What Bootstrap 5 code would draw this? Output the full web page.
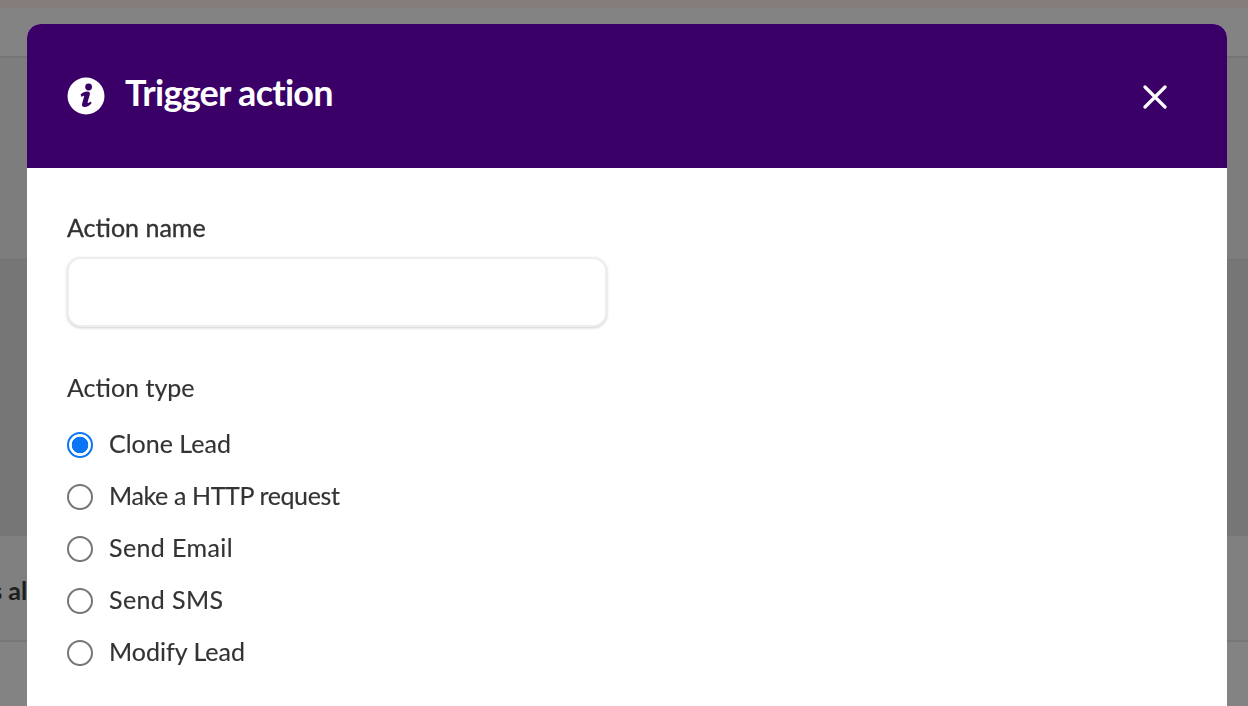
<!DOCTYPE html>
<html lang="en">
<head>
    <meta charset="UTF-8">
    <meta name="viewport" content="width=device-width, initial-scale=1.0">
    <title>Trigger action</title>
    <link href="https://cdn.jsdelivr.net/npm/bootstrap@5.3.0/dist/css/bootstrap.min.css" rel="stylesheet">
    <style>
        body {
            font-family: "Lato", "Open Sans", sans-serif;
            color: #333;
            background-color: #fbfbfb;
            overflow: hidden;
        }
        .page-topbar {
            height: 8px;
            background-color: #fff0e8;
        }
        .page-head {
            height: 50px;
            border-bottom: 2px solid #e1e1e1;
        }
        .page-tabs {
            height: 203px;
            background-color: #f0f0f0;
            border-bottom: 2px solid #dcdcdc;
        }
        .page-panel {
            height: 275px;
            background-color: #e3e3e3;
        }
        .page-row {
            height: 106px;
            padding-top: 39px;
            border-bottom: 2px solid #e4e4e4;
            background-color: #f6f6f6;
            font-size: 25px;
            line-height: 30px;
            font-weight: 700;
            color: #3a3a3a;
            white-space: nowrap;
            text-indent: -142px;
        }
        .modal-backdrop.show {
            opacity: .48;
        }
        .trigger-dialog {
            max-width: 1200px;
            width: 1200px;
            margin: 24px 0 0 27px;
        }
        .trigger-dialog .modal-content {
            border: 0;
            border-radius: 14px 14px 0 0;
        }
        .trigger-head {
            height: 144px;
            padding: 0 60px 0 40px;
            background-color: #3a0068;
            border: 0;
            border-radius: 14px 14px 0 0;
        }
        .trigger-title {
            font-size: 36px;
            line-height: 44px;
            font-weight: 700;
            letter-spacing: -.72px;
            color: #fff;
            margin-top: -8px;
        }
        .trigger-icon {
            width: 38px;
            height: 38px;
            margin-right: 20px;
            flex-shrink: 0;
            margin-top: -1px;
        }
        .trigger-close {
            width: 24px;
            height: 24px;
            line-height: 0;
            margin-top: 2px;
        }
        .trigger-body {
            padding: 43px 40px 60px;
        }
        .field-label {
            font-size: 25px;
            line-height: 32px;
            margin-bottom: 14px;
            -webkit-text-stroke: .35px #333;
        }
        .field-name {
            width: 540px;
            height: 70px;
            border: 2px solid #eee;
            border-radius: 14px;
            box-shadow: 0 1px 3px rgba(0, 0, 0, .2);
            margin-bottom: 44px;
        }
        .type-label {
            font-size: 25px;
            line-height: 32px;
            margin-bottom: 16px;
            -webkit-text-stroke: .15px #333;
        }
        .type-option {
            display: flex;
            align-items: center;
            height: 52px;
            padding: 0;
            margin: 0;
            font-size: 25px;
            -webkit-text-stroke: .15px #333;
        }
        .type-option span {
            margin-top: -2px;
        }
        .type-option .tight-text {
            letter-spacing: -.38px;
        }
        .type-option .wide-text {
            letter-spacing: .4px;
        }
        .type-option .form-check-input {
            width: 26px;
            height: 26px;
            margin: 0 16px 0 0;
            border: 2px solid #767676;
            float: none;
        }
        .type-option .form-check-input:checked {
            background-color: #fff;
            border-color: #0a75f5;
            background-image: radial-gradient(circle, #0a75f5 0, #0a75f5 8px, transparent 8.6px);
        }
    </style>
</head>
<body>
    <div class="page-topbar"></div>
    <div class="page-head"></div>
    <div class="page-tabs"></div>
    <div class="page-panel"></div>
    <div class="page-row">Notifications always</div>

    <div class="modal-backdrop fade show"></div>
    <div class="modal d-block overflow-hidden" tabindex="-1">
        <div class="modal-dialog trigger-dialog">
            <div class="modal-content">
                <div class="modal-header trigger-head">
                    <div class="d-flex align-items-center">
                        <svg class="trigger-icon" viewBox="0 0 38 38">
                            <circle cx="19" cy="19" r="18.5" fill="#fff"/>
                            <circle cx="21.6" cy="10" r="3.4" fill="#3a0068"/>
                            <path d="M13.5 17.6c2-2 4.4-3.2 6.8-3.2 2 0 3 1.1 2.5 3l-2.2 7.8c-.2.8.4 1 1 .6.6-.4 1.2-.9 1.7-1.4l1.4 1.6c-2.2 2.6-4.6 4-7 4-2.2 0-3.2-1.2-2.6-3.3l2-7.2c.2-.8-.4-1-1-.6-.5.3-1 .7-1.4 1.1z" fill="#3a0068"/>
                        </svg>
                        <h5 class="modal-title trigger-title">Trigger action</h5>
                    </div>
                    <button type="button" class="btn p-0 border-0 trigger-close" aria-label="Close">
                        <svg width="24" height="24" viewBox="0 0 24 24"><path d="M2 2l20 20M22 2L2 22" stroke="#fff" stroke-width="3.2" stroke-linecap="round" fill="none"/></svg>
                    </button>
                </div>
                <div class="modal-body trigger-body">
                    <label class="form-label d-block field-label" for="actionName">Action name</label>
                    <input type="text" class="form-control field-name" id="actionName">
                    <div class="type-label">Action type</div>
                    <label class="form-check type-option"><input class="form-check-input" type="radio" name="actionType" checked><span>Clone Lead</span></label>
                    <label class="form-check type-option"><input class="form-check-input" type="radio" name="actionType"><span class="tight-text">Make a HTTP request</span></label>
                    <label class="form-check type-option"><input class="form-check-input" type="radio" name="actionType"><span class="wide-text">Send Email</span></label>
                    <label class="form-check type-option"><input class="form-check-input" type="radio" name="actionType"><span class="wide-text">Send SMS</span></label>
                    <label class="form-check type-option"><input class="form-check-input" type="radio" name="actionType"><span>Modify Lead</span></label>
                </div>
            </div>
        </div>
    </div>
    <script src="https://cdn.jsdelivr.net/npm/bootstrap@5.3.0/dist/js/bootstrap.bundle.min.js"></script>
</body>
</html>
